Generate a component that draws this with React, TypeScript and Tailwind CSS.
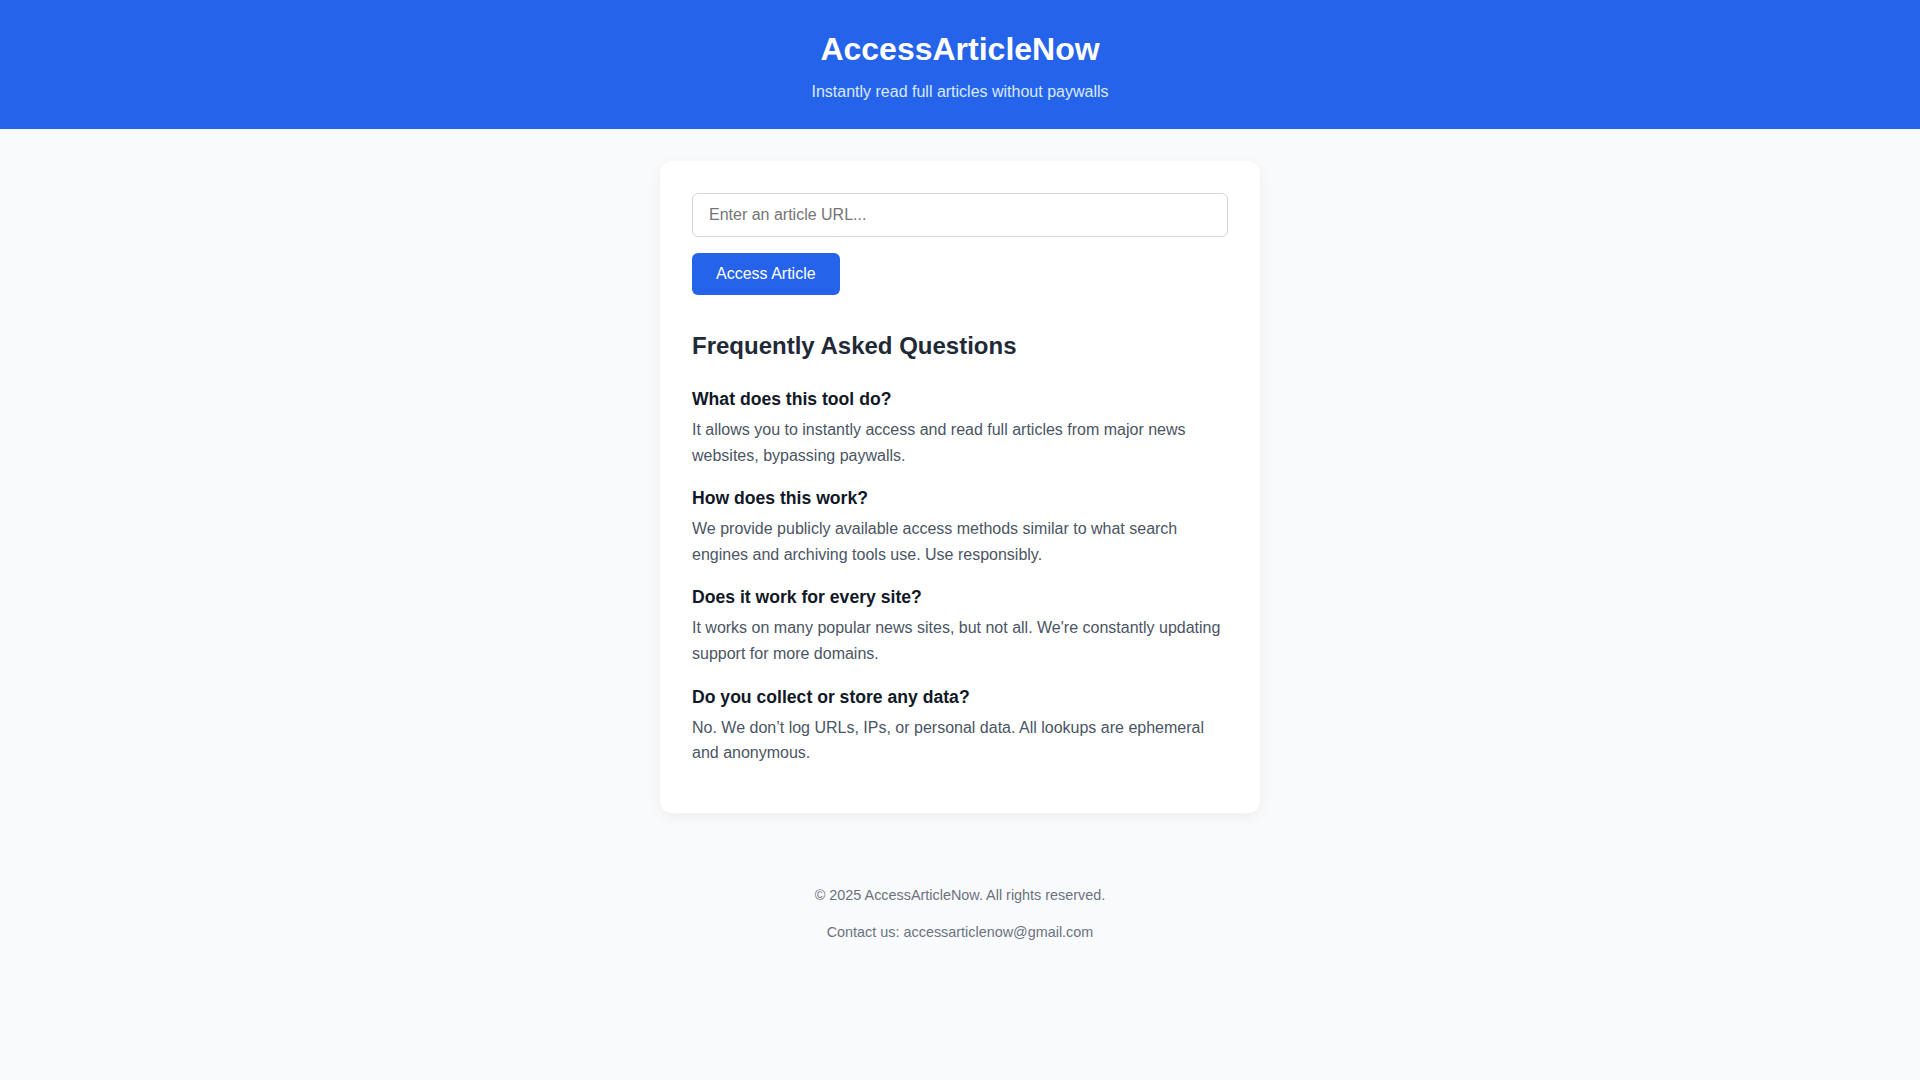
const faqs = [
  {
    q: 'What does this tool do?',
    a: 'It allows you to instantly access and read full articles from major news websites, bypassing paywalls.'
  },
  {
    q: 'How does this work?',
    a: 'We provide publicly available access methods similar to what search engines and archiving tools use. Use responsibly.'
  },
  {
    q: 'Does it work for every site?',
    a: "It works on many popular news sites, but not all. We're constantly updating support for more domains."
  },
  {
    q: 'Do you collect or store any data?',
    a: 'No. We don\u2019t log URLs, IPs, or personal data. All lookups are ephemeral and anonymous.'
  }
];

export default function App() {
  return (
    <div className="min-h-screen bg-[#f9fafb] font-['Liberation_Sans',Arial,sans-serif]">
      <header className="bg-[#2563eb] pb-[28px] pt-[31px] text-center text-white">
        <h1 className="text-[32px] font-bold leading-[37px]">AccessArticleNow</h1>
        <p className="mt-[15px] text-[16px] leading-[18px] text-[#dbeafe]">
          Instantly read full articles without paywalls
        </p>
      </header>

      <main className="mx-auto mt-[32px] w-[600px] rounded-xl bg-white px-8 pb-[47px] pt-8 shadow-[0_4px_14px_rgba(0,0,0,0.05)]">
        <input
          type="text"
          placeholder="Enter an article URL..."
          className="block h-[44px] w-full rounded-md border border-[#d1d5db] px-4 text-[16px] text-gray-900 outline-none placeholder:text-[#757575]"
        />
        <button
          type="button"
          className="mt-4 h-[42px] rounded-md bg-[#2563eb] px-6 text-[16px] text-white"
        >
          Access Article
        </button>

        <h2 className="mb-[29px] mt-[37px] text-[24px] font-bold leading-[28px] text-[#1f2937]">
          Frequently Asked Questions
        </h2>

        <div className="space-y-5">
          {faqs.map((item) => (
            <div key={item.q}>
              <h3 className="mb-2 text-[17.6px] font-bold leading-[20px] text-[#111827]">{item.q}</h3>
              <p className="text-[16px] leading-[1.6] text-[#4b5563]">{item.a}</p>
            </div>
          ))}
        </div>
      </main>

      <footer className="mt-[74px] pb-10 text-center text-[14.4px] leading-[16.5px] text-[#6b7280]">
        <p>© 2025 AccessArticleNow. All rights reserved.</p>
        <p className="mt-[21px]">Contact us: accessarticlenow@gmail.com</p>
      </footer>
    </div>
  );
}
